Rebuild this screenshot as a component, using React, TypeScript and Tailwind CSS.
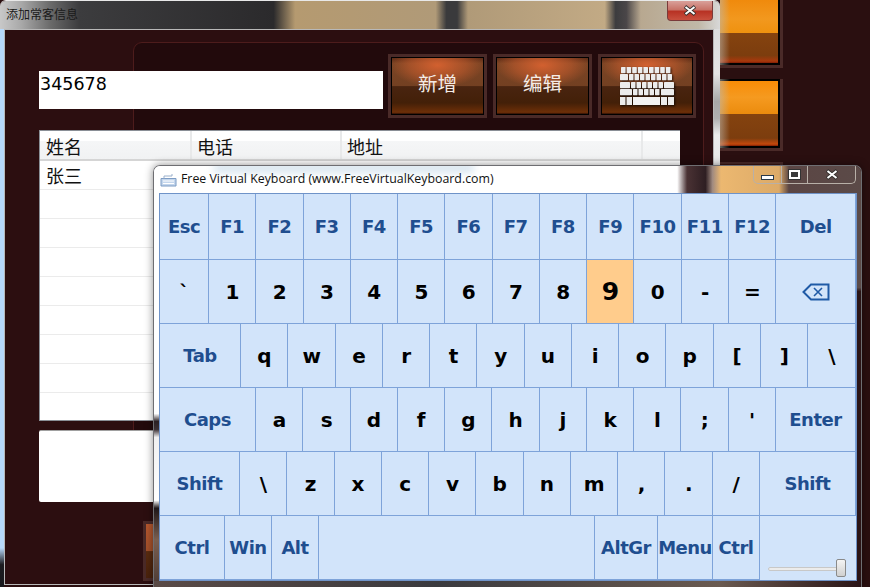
import type { ReactNode } from "react";

const cjk = "font-['Noto_Sans_CJK_SC','Liberation_Sans',sans-serif]";

// keyboard rows: label + width of the cell, border pixel included
type Key = { label: ReactNode; w: number; fn?: boolean; hot?: boolean };
const STD = 47.27;
const k = (label: ReactNode, w = STD): Key => ({ label, w });
const f = (label: ReactNode, w = STD): Key => ({ label, w, fn: true });

function BackspaceIcon() {
  return (
    <svg width="28" height="18" viewBox="0 0 28 18" fill="none" stroke="#1f5aa6" strokeWidth="2">
      <path d="M1.5 9 9 1.5h17.5v15H9z" />
      <path d="M12 5l8 8M20 5l-8 8" strokeWidth="1.6" />
    </svg>
  );
}

const rows: { h: number; keys: Key[] }[] = [
  {
    h: 66,
    keys: [
      f("Esc", 49), f("F1"), f("F2"), f("F3"), f("F4"), f("F5"), f("F6"), f("F7"), f("F8"), f("F9"), f("F10"), f("F11"), f("F12"),
      f("Del", 80),
    ],
  },
  {
    h: 64,
    keys: [
      k("`", 49), k("1"), k("2"), k("3"), k("4"), k("5"), k("6"), k("7"), k("8"),
      { label: <span className="text-[25px]">9</span>, w: STD, hot: true },
      k("0"), k("-"), k("="),
      { label: <BackspaceIcon />, w: 80 },
    ],
  },
  {
    h: 64,
    keys: [
      f("Tab", 81), k("q"), k("w"), k("e"), k("r"), k("t"), k("y"), k("u"), k("i"), k("o"), k("p"), k("["), k("]"), k("\\", 48),
    ],
  },
  {
    h: 64,
    keys: [
      f("Caps", 96), k("a"), k("s"), k("d"), k("f"), k("g"), k("h"), k("j"), k("k"), k("l"), k(";"), k("'"), f("Enter", 80),
    ],
  },
  {
    h: 64,
    keys: [
      f("Shift", 80), k("\\"), k("z"), k("x"), k("c"), k("v"), k("b"), k("n"), k("m"), k(","), k("."), k("/"), f("Shift", 96),
    ],
  },
];

const bottom: Key[] = [f("Ctrl", 65), f("Win", 47), f("Alt", 47), f("", 276), f("AltGr", 63), f("Menu", 55), f("Ctrl", 47)];

function KeyCap({ item }: { item: Key }) {
  return (
    <div
      style={{ width: item.w }}
      className={`flex h-full shrink-0 items-center justify-center border-r border-b border-[#7ea3d9] ${
        item.hot ? "bg-[#ffcc8c]" : "bg-[#d2e4fa]"
      } ${item.fn ? "text-[18px] text-[#1f4e8f]" : "text-[20px] text-black"} font-['DejaVu_Sans',sans-serif] font-bold tracking-[-0.5px]`}
    >
      {item.label}
    </div>
  );
}

function KeyboardGlyph({ className }: { className?: string }) {
  const cap = "#ececec";
  // x, width per key, row by row
  const layout: [number, number][][] = [
    [0, 1, 2, 3, 4, 5, 6, 7, 8].map((i) => [i * 5.6 + 1, 4.6]),
    [[0, 8], ...[0, 1, 2, 3, 4, 5, 6, 7].map((i): [number, number] => [9 + i * 5.5, 4.5])],
    [[0, 10], ...[0, 1, 2, 3, 4, 5].map((i): [number, number] => [11 + i * 5.5, 4.5]), [44, 10]],
    [[0, 12], ...[0, 1, 2, 3, 4].map((i): [number, number] => [13 + i * 5.5, 4.5]), [41, 13]],
  ];
  const tops = [0, 7, 15, 22];
  return (
    <svg viewBox="0 0 54 38" className={className}>
      {layout.map((row, r) =>
        row.map(([x, w], i) => <rect key={`${r}-${i}`} x={x} y={tops[r]} width={w} height={6.2} rx="0.6" fill={cap} />),
      )}
      <rect x="0" y="30" width="5.5" height="8" fill={cap} />
      <rect x="6.5" y="30" width="5.5" height="8" fill={cap} />
      <rect x="13" y="30" width="27" height="8" fill="#f2f2f2" />
      <rect x="41" y="30" width="6" height="8" fill={cap} />
      <rect x="48" y="30" width="6" height="8" fill={cap} />
    </svg>
  );
}

function GlossButton({ children, width }: { children: ReactNode; width: string }) {
  return (
    <div className={`${width} h-[64px] shrink-0 border-[3px] border-[#4a2a28] bg-black p-px`}>
      <div className="relative flex h-full items-center justify-center overflow-hidden bg-[linear-gradient(180deg,#5e2c16_0%,#7a4424_10%,#734022_50%,#492410_51%,#432008_80%,#6e2f08_97%,#2c0e04_100%)]">
        <div className="absolute top-0 left-0 h-[29px] w-full bg-[radial-gradient(ellipse_at_50%_25%,#d2602f_0%,rgba(210,96,47,0.45)_45%,rgba(210,96,47,0)_72%)]" />
        <div className="relative -mt-[6px] text-[19.5px] text-[#f4ece6]">{children}</div>
      </div>
    </div>
  );
}

function OrangeTile({ height, bg }: { height: string; bg: string }) {
  return (
    <div className={`relative ${height} w-[63px] border-r-[3px] border-b-[3px] border-[#4a2a28]`}>
      <div className={`h-full w-full border-r-2 border-b-2 border-black ${bg}`} />
      <div className="absolute inset-y-0 left-0 w-[10px] bg-[linear-gradient(90deg,rgba(190,185,175,0.55),rgba(190,185,175,0))]" />
    </div>
  );
}

export default function App() {
  return (
    <div className={`relative h-[587px] w-[870px] overflow-hidden bg-[#2a0f10] ${cjk}`}>
      {/* app behind the dialog */}
      <div className="absolute top-0 left-[720px] flex flex-col gap-[11px]">
        <OrangeTile height="h-[68px]" bg="bg-[linear-gradient(180deg,#f08a0c_0%,#f2981e_30%,#ef920f_52%,#85430f_53%,#7c3d0e_88%,#a8380c_97%,#801e04_100%)]" />
        <OrangeTile height="h-[72px]" bg="border-t-2 bg-[linear-gradient(180deg,#f88c06_0%,#f59a20_25%,#ec8c0e_50%,#85430f_51%,#7c3d0e_88%,#c4480c_97%,#801e04_100%)]" />
        <div className="h-[40px] w-[63px] border-t-2 border-r-[3px] border-[#4a2a28] bg-[#3a1512]" />
      </div>

      {/* customer dialog */}
      <div className="absolute top-0 left-0 h-[587px] w-[720px] overflow-hidden rounded-t-[6px] border-t border-[#e8e8e8]">
        <div className="relative flex h-[28px] items-start pt-[5px] pl-[6px] text-[12px] leading-[16px] text-[#1a1a1a] bg-[linear-gradient(90deg,#c8c8c8_0%,#a8a8a8_3%,#6a6a6a_7%,#3c3c3e_11%,#2b2a2c_38%,#b59a70_41%,#b09a78_60.5%,#3a3a3c_62%,#3a3a3c_63.5%,#b09a78_65%,#c2aa85_84%,#3c3c3e_85.5%,#4a4648_87%,#b8a890_89%,#c0b8a8_97%,#d8d8d8_100%)]">
          添加常客信息
          <div className="absolute top-0 left-[667px] flex h-[20px] w-[46px] items-center justify-center rounded-b-[4px] border border-t-0 border-[#7a3a3a] bg-[linear-gradient(180deg,#d9a09a_0%,#c87368_45%,#b83224_55%,#c8503e_100%)]">
            <svg width="14" height="11" viewBox="0 0 14 11">
              <path d="M2 1.5l10 8M12 1.5l-10 8" stroke="#33302e" strokeWidth="3.6" />
              <path d="M2.5 2l9 7M11.5 2l-9 7" stroke="#fff" strokeWidth="2" />
            </svg>
          </div>
        </div>

        <div className="flex h-[558px]">
          <div className="w-[4px] bg-[linear-gradient(180deg,#b7d9fb_0%,#b7d9fb_93%,#1c1c20_96%,#18181c_100%)]" />
          <div className="relative h-[556px] w-[710px] border border-[#b8b8b8] bg-[#2c0e10]">
            <div className="absolute top-[12px] left-[128px] h-[450px] w-[571px] rounded-[9px] border border-[#4d1c1c] bg-[#220a0c]" />
            <div className="relative flex items-start pt-[24px] pl-[34px]">
              <div className="mt-[17px] h-[38px] w-[344px] bg-white pl-px font-['DejaVu_Sans',sans-serif] text-[17.5px] leading-[26px] text-black">345678</div>
              <div className="ml-[5px] flex gap-[6px]">
                <GlossButton width="w-[99px]">新增</GlossButton>
                <GlossButton width="w-[99px]">编辑</GlossButton>
                <GlossButton width="w-[98px]">
                  <KeyboardGlyph className="mt-[6px] h-[38px] w-[54px] drop-shadow-[1px_1px_1px_rgba(0,0,0,0.7)]" />
                </GlossButton>
              </div>
            </div>

            {/* customer table */}
            <div className="relative mt-[12px] ml-[34px] h-[291px] w-[641px] overflow-hidden border-t border-l border-b border-[#8a8f96] bg-white text-[18px] text-[#111]">
              <div className="flex h-[30px] border-b-2 border-[#d5d5d5] bg-[linear-gradient(180deg,#ffffff_0%,#ffffff_35%,#f5f6f7_36%,#f1f2f3_100%)] leading-[30px]">
                <div className="w-[152px] border-r-2 border-[#e8e9ea] pl-[6px]">姓名</div>
                <div className="w-[150px] border-r-2 border-[#e8e9ea] pl-[5px]">电话</div>
                <div className="w-[301px] border-r-2 border-[#e8e9ea] pl-[5px]">地址</div>
                <div className="flex-1" />
              </div>
              {["张三", "", "", "", "", "", "", "", ""].map((name, i) => (
                <div key={i} className="h-[29px] border-b border-[#ebebeb] pl-[6px] leading-[28px] last:border-b-0">
                  {name}
                </div>
              ))}
            </div>

            <div className="relative mt-[9px] ml-[34px] h-[72px] w-[200px] rounded-[2px] border-t border-[#a0a0a0] bg-white" />
            <div className="absolute top-[491px] left-[138px] h-[60px] w-[20px] border-[3px] border-[#4a2a28] bg-[linear-gradient(180deg,#b5572e_0%,#a2502a_50%,#5a2c10_51%,#4a220c_100%)]" />
          </div>
          <div className="w-[6px] bg-[linear-gradient(180deg,#dcdcdc_0%,#e4e4e4_8%,#a8a8a8_13%,#b0b0b0_16%,#ececec_19%,#e8e8e8_24%,#a0a0a0_27%,#d8d8d8_30%)]" />
        </div>
      </div>

      {/* virtual keyboard window */}
      <div className="absolute top-[165px] left-[153px] h-[422px] w-[709px] overflow-hidden rounded-t-[7px] border-t border-r border-l border-[#6e6e72] shadow-[0_0_8px_rgba(0,0,0,0.45)]">
        <div className="relative flex h-[27px] items-center overflow-hidden pl-[6px] font-['Open_Sans',sans-serif] text-[12.35px] text-[#111] bg-[linear-gradient(90deg,#ffffff_0%,#ffffff_74%,#4a3234_75.4%,#2e1e22_78%,#a08a80_79%,#ecb870_80.2%,#dcaa68_88.4%,#5b4644_89.8%,#5b4a48_100%)]">
          <div className="absolute top-[-2px] left-[60px] h-[8px] w-[260px] bg-[#cfe0ec] blur-[4px]" />
          <svg width="17" height="14" viewBox="0 0 17 14" className="relative mr-[4px]">
            <path d="M1 5.5h15v7.5H1z" fill="#c4d6ec" stroke="#7d9cc4" />
            <path d="M4 5.5V3h8V1" fill="none" stroke="#9ab0cc" />
            <path d="M3 8h11M3 10.5h11" stroke="#fff" />
          </svg>
          <span className="relative">Free Virtual Keyboard (www.FreeVirtualKeyboard.com)</span>

          <div className="absolute top-0 right-[5px] flex h-[18px] w-[103px] rounded-b-[5px] border border-t-0 border-[#b8b0a8]">
            <div className="flex w-[28px] items-center justify-center border-r border-[#b8b0a8]">
              <div className="mt-[6px] h-[5px] w-[13px] border border-[#2a3a4a] bg-white" />
            </div>
            <div className="flex w-[26px] items-center justify-center border-r border-[#b8b0a8]">
              <div className="h-[9px] w-[11px] border-[2px] border-white bg-[#3a3a3a] outline outline-[#333]" />
            </div>
            <div className="flex flex-1 items-center justify-center">
              <svg width="14" height="11" viewBox="0 0 14 11">
                <path d="M2 1.5l10 8M12 1.5l-10 8" stroke="#33302e" strokeWidth="3.6" />
                <path d="M2.5 2l9 7M11.5 2l-9 7" stroke="#fff" strokeWidth="2" />
              </svg>
            </div>
          </div>
        </div>

        <div className="flex h-[394px]">
          <div className="w-[5px] bg-[linear-gradient(180deg,#ffffff_0%,#ffffff_56%,#2a2024_58%,#3a3034_60%,#f0f0f0_62%,#ffffff_78%,#1e1618_80%,#7a5f50_88%,#4a3a34_100%)]" />
          <div className="h-[388px] w-[698px] border border-[#6f93c8] bg-[#d2e4fa]">
            {rows.map((row, i) => (
              <div key={i} className="flex" style={{ height: row.h }}>
                {row.keys.map((item, j) => (
                  <KeyCap key={j} item={item} />
                ))}
              </div>
            ))}
            <div className="flex h-[64px]">
              {bottom.map((item, j) => (
                <KeyCap key={j} item={item} />
              ))}
              <div className="relative flex-1">
                <div className="absolute top-[51px] left-[8px] h-[4px] w-[70px] rounded-sm border border-[#c8c8c8] bg-[#ececec]" />
                <div className="absolute top-[43px] left-[76px] h-[18px] w-[10px] rounded-[2px] border border-[#8a8a8a] bg-[linear-gradient(180deg,#f4f4f4,#d0d0d0)]" />
              </div>
            </div>
          </div>
          <div className="flex-1 bg-[linear-gradient(180deg,#5b4a48_0%,#5b4a48_24%,#2a1416_25%,#2a1416_100%)]" />
        </div>
      </div>
      <div className="absolute top-[581px] left-[154px] h-[6px] w-[707px] bg-[linear-gradient(90deg,#5a4a46,#3a3a3e_40%,#6a5a50_80%,#2a1416)]" />
    </div>
  );
}
